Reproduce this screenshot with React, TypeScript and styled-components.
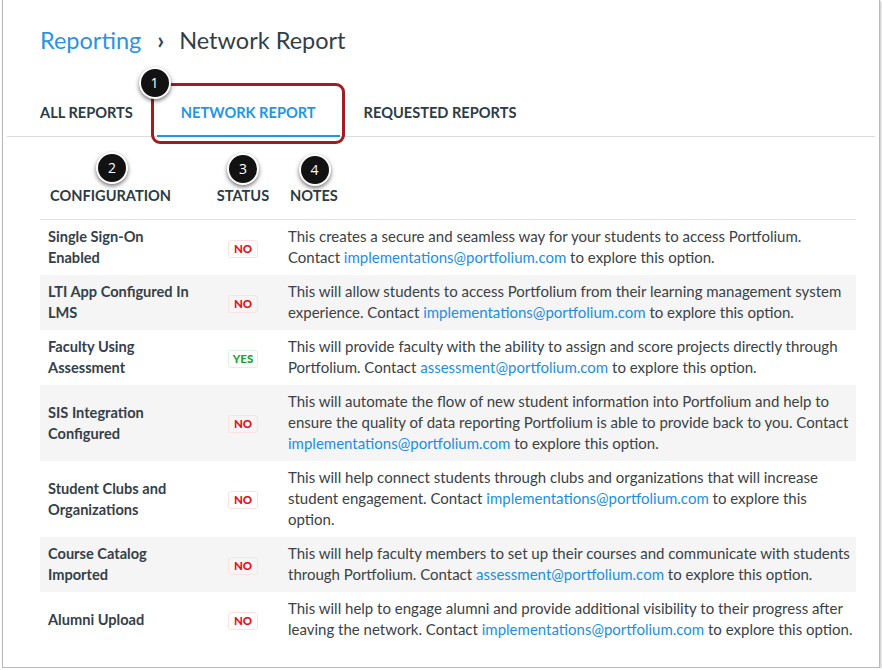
import React from "react";
import styled, { createGlobalStyle } from "styled-components";

const GlobalStyle = createGlobalStyle`
  html, body {
    margin: 0;
    padding: 0;
    background: #ffffff;
  }
  body {
    font-family: Lato, "Open Sans", "Liberation Sans", sans-serif;
    color: #2d3b45;
  }
`;

type Row = {
  name: string[];
  ok: boolean;
  // lines of the note, [[...]] marks an email link
  note: string[];
};

const rows: Row[] = [
  {
    name: ["Single Sign-On", "Enabled"],
    ok: false,
    note: [
      "This creates a secure and seamless way for your students to access Portfolium.",
      "Contact [[implementations@portfolium.com]] to explore this option.",
    ],
  },
  {
    name: ["LTI App Configured In", "LMS"],
    ok: false,
    note: [
      "This will allow students to access Portfolium from their learning management system",
      "experience. Contact [[implementations@portfolium.com]] to explore this option.",
    ],
  },
  {
    name: ["Faculty Using", "Assessment"],
    ok: true,
    note: [
      "This will provide faculty with the ability to assign and score projects directly through",
      "Portfolium. Contact [[assessment@portfolium.com]] to explore this option.",
    ],
  },
  {
    name: ["SIS Integration", "Configured"],
    ok: false,
    note: [
      "This will automate the flow of new student information into Portfolium and help to",
      "ensure the quality of data reporting Portfolium is able to provide back to you. Contact",
      "[[implementations@portfolium.com]] to explore this option.",
    ],
  },
  {
    name: ["Student Clubs and", "Organizations"],
    ok: false,
    note: [
      "This will help connect students through clubs and organizations that will increase",
      "student engagement. Contact [[implementations@portfolium.com]] to explore this",
      "option.",
    ],
  },
  {
    name: ["Course Catalog", "Imported"],
    ok: false,
    note: [
      "This will help faculty members to set up their courses and communicate with students",
      "through Portfolium. Contact [[assessment@portfolium.com]] to explore this option.",
    ],
  },
  {
    name: ["Alumni Upload"],
    ok: false,
    note: [
      "This will help to engage alumni and provide additional visibility to their progress after",
      "leaving the network. Contact [[implementations@portfolium.com]] to explore this option.",
    ],
  },
];

const callouts = [
  { n: 1, x: 154.5, y: 83 },
  { n: 2, x: 112, y: 167.5 },
  { n: 3, x: 243, y: 169 },
  { n: 4, x: 314.5, y: 170 },
];

function NoteLine({ text }: { text: string }) {
  const parts = text.split(/\[\[(.+?)\]\]/);
  return (
    <Line>
      {parts.map((p, i) =>
        i % 2 === 1 ? (
          <Mail key={i} href="#">
            {p}
          </Mail>
        ) : (
          <React.Fragment key={i}>{p}</React.Fragment>
        )
      )}
    </Line>
  );
}

export default function App() {
  return (
    <>
      <GlobalStyle />
      <Panel>
        <Breadcrumb>
          <Crumb href="#">Reporting</Crumb>
          <Chevron>›</Chevron>
          <Current>Network Report</Current>
        </Breadcrumb>

        <TabBar>
          <Tab>All Reports</Tab>
          <Tab $active>Network Report</Tab>
          <Tab>Requested Reports</Tab>
        </TabBar>

        <TableWrap>
          <Table>
            <thead>
              <tr>
                <HeadCell $align="left" $pad={10}>
                  Configuration
                </HeadCell>
                <HeadCell $align="center" $pad={0}>
                  Status
                </HeadCell>
                <HeadCell $align="left" $pad={10}>
                  Notes
                </HeadCell>
              </tr>
            </thead>
            <tbody>
              {rows.map((r, i) => (
                <BodyRow key={r.name.join(" ")} $striped={i % 2 === 1}>
                  <NameCell>
                    {r.name.map((n) => (
                      <Line key={n}>{n}</Line>
                    ))}
                  </NameCell>
                  <StatusCell>
                    <Status $ok={r.ok}>{r.ok ? "YES" : "NO"}</Status>
                  </StatusCell>
                  <NoteCell>
                    {r.note.map((l) => (
                      <NoteLine key={l} text={l} />
                    ))}
                  </NoteCell>
                </BodyRow>
              ))}
            </tbody>
          </Table>
        </TableWrap>

        <Highlight />
        {callouts.map((c) => (
          <Callout key={c.n} style={{ left: c.x - 3 - 16, top: c.y - 16 }}>
            {c.n}
          </Callout>
        ))}
      </Panel>
    </>
  );
}

const Panel = styled.div`
  position: relative;
  box-sizing: border-box;
  width: 878px;
  height: 668px;
  margin-left: 2px;
  border: 1px solid #b9b9b9;
  border-top: none;
  box-shadow: 1px 1px 2px rgba(0, 0, 0, 0.25);
  background: #ffffff;
  overflow: hidden;
`;

const Breadcrumb = styled.div`
  display: flex;
  align-items: baseline;
  padding: 25px 0 0 37px;
  font-size: 23.5px;
  line-height: 30px;
`;

const Crumb = styled.a`
  color: #2a94e2;
  text-decoration: none;
`;

const Chevron = styled.span`
  margin: 0 15px 0 16px;
  color: #3b4650;
  font-size: 24px;
  font-weight: 700;
`;

const Current = styled.span`
  color: #333d46;
`;

const TabBar = styled.div`
  display: flex;
  margin: 36px 4px 0;
  padding-left: 9px;
  border-bottom: 1.5px solid #dcdcdc;
`;

const Tab = styled.div<{ $active?: boolean }>`
  padding: 12px 24px 12px;
  border-bottom: 2px solid ${({ $active }) => ($active ? "#1e96ea" : "transparent")};
  margin-bottom: -1.5px;
  color: ${({ $active }) => ($active ? "#1e96ea" : "#2d3b45")};
  font-size: 14.6px;
  font-weight: 700;
  line-height: 20px;
  text-transform: uppercase;
  white-space: nowrap;
`;

const TableWrap = styled.div`
  padding: 0 23px 0 37px;
`;

const Table = styled.table`
  width: 100%;
  border-collapse: collapse;
  table-layout: fixed;
`;

const HeadCell = styled.th<{ $align: "left" | "center"; $pad: number }>`
  padding: 49px 0 13px ${({ $pad }) => $pad}px;
  border-bottom: 1px solid #e2e2e2;
  text-align: ${({ $align }) => $align};
  color: #2d3b45;
  font-size: 14.6px;
  font-weight: 700;
  line-height: 20px;
  text-transform: uppercase;

  &:first-child {
    width: 156px;
  }
  &:nth-child(2) {
    width: 74px;
  }
`;

const BodyRow = styled.tr<{ $striped: boolean }>`
  background: ${({ $striped }) => ($striped ? "#f5f5f5" : "#ffffff")};
`;

const Line = styled.span`
  display: block;
  white-space: nowrap;
`;

const NameCell = styled.td`
  padding: 6.5px 8px;
  color: #34404a;
  font-size: 14.6px;
  font-weight: 700;
  line-height: 21px;
  vertical-align: middle;
`;

const StatusCell = styled.td`
  padding: 6.5px 0;
  text-align: center;
  vertical-align: middle;
`;

const Status = styled.span<{ $ok: boolean }>`
  display: inline-block;
  box-sizing: border-box;
  min-width: 30px;
  padding: 0 4px;
  border: 1.5px solid ${({ $ok }) => ($ok ? "#dcf3e0" : "#fbe1e1")};
  border-radius: 3px;
  color: ${({ $ok }) => ($ok ? "#18a431" : "#e8101c")};
  font-size: 11.5px;
  font-weight: 900;
  line-height: 16px;
`;

const NoteCell = styled.td`
  padding: 6.5px 8px;
  color: #3a4147;
  font-size: 15px;
  line-height: 21px;
  vertical-align: middle;
`;

const Mail = styled.a`
  color: #1b8fe3;
  text-decoration: none;
`;

const Highlight = styled.div`
  position: absolute;
  left: 148px;
  top: 83px;
  width: 194px;
  height: 61px;
  box-sizing: border-box;
  border: 3.5px solid #9e1c22;
  border-radius: 9px;
  pointer-events: none;
`;

const Callout = styled.div`
  position: absolute;
  box-sizing: border-box;
  width: 32px;
  height: 32px;
  border: 2px solid #ffffff;
  border-radius: 50%;
  background: #121212;
  box-shadow: 0 2px 4px rgba(0, 0, 0, 0.55);
  color: #ffffff;
  font-family: "Open Sans", "Liberation Sans", sans-serif;
  font-size: 14px;
  line-height: 28px;
  text-align: center;
`;
